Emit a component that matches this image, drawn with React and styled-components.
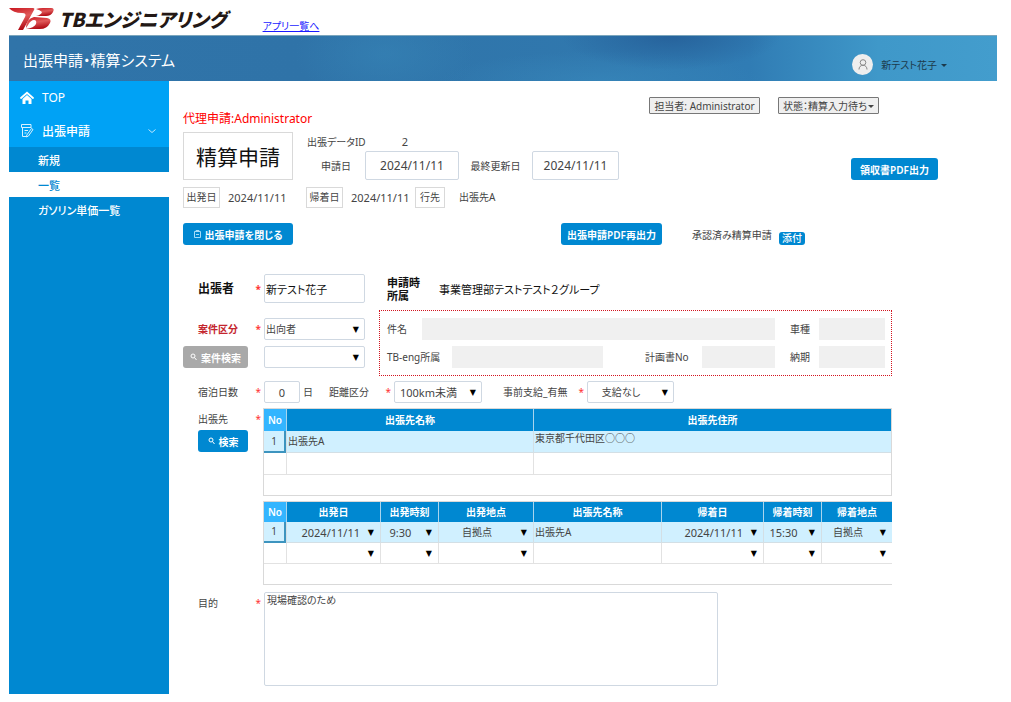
import React from "react";
import styled, { createGlobalStyle, css } from "styled-components";

const color = {
  blue: "#0088d1",
  sky: "#00a2f5",
  pale: "#d0f0ff",
  line: "#d9d9d9",
  field: "#cfd8e2",
  text: "#444",
};

const Global = createGlobalStyle`
  *, *::before, *::after { box-sizing: border-box; }
  body { margin: 0; background: #fff; }
  body, button, input, select, textarea {
    font-family: "Noto Sans", "Noto Sans CJK JP", sans-serif;
    font-feature-settings: "palt";
    font-size: 10px;
    color: ${color.text};
  }
`;

const Page = styled.div`
  padding: 0 14px 8px 9px;
`;

const BrandBar = styled.header`
  display: flex;
  align-items: flex-end;
  height: 35px;
`;

const Logo = styled.div`
  display: flex;
  align-items: center;
  gap: 4px;
  height: 30px;
  margin-bottom: 1px;
  color: #231815;
  font-family: "Noto Sans CJK JP", sans-serif;
  font-size: 19px;
  font-weight: 900;
  font-style: italic;
  line-height: 30px;
  white-space: nowrap;
`;

const AppListLink = styled.a`
  margin-left: 36px;
  color: #1a1aff;
  font-size: 10px;
  line-height: 18px;
`;

const Banner = styled.div`
  display: flex;
  align-items: center;
  justify-content: space-between;
  height: 46px;
  padding: 2px 50px 0 14px;
  border-top: 1px solid #7ba6bd;
  background:
    radial-gradient(ellipse 110px 34px at 67% 0%, #235a94bb 0%, #235a9400 100%),
    radial-gradient(ellipse 160px 30px at 60% 100%, #3a8cbf88 0%, #3a8cbf00 100%),
    radial-gradient(ellipse 90px 50px at 38% 40%, #3786b888 0%, #3786b800 100%),
    linear-gradient(90deg, #3074a9 0%, #2f73a8 30%, #3078ae 60%, #307cb4 75%, #3f98c9 88%, #439dcd 100%);
`;

const SystemTitle = styled.h1`
  margin: 0;
  color: #fff;
  font-size: 15px;
  font-weight: 400;
`;

const UserMenu = styled.button`
  display: flex;
  align-items: center;
  gap: 8px;
  padding: 9px 0 0;
  border: 0;
  background: none;
  color: #1c3a4c;
  font-size: 10px;
`;

const Avatar = styled.span`
  display: grid;
  place-items: center;
  width: 21px;
  height: 21px;
  border-radius: 50%;
  background: #eee;
`;

const Caret = styled.span`
  display: inline-block;
  margin-left: ${(p) => p.$gap || 0}px;
  border: 3px solid transparent;
  border-top-color: currentColor;
  border-bottom: 0;
  vertical-align: middle;
`;

const Body = styled.div`
  display: flex;
`;

const Sidebar = styled.nav`
  flex: 0 0 160px;
  background: ${color.blue};
`;

const NavItem = styled.a`
  display: flex;
  align-items: center;
  gap: 8px;
  height: 33px;
  padding: 0 12px 0 11px;
  background: ${color.sky};
  color: #fff;
  font-size: 12px;
  font-weight: ${(p) => (p.$strong ? 500 : 400)};
  text-decoration: none;

  svg:last-child:not(:first-child) {
    margin-left: auto;
  }
`;

const SubItem = styled.a`
  display: flex;
  align-items: center;
  height: 25px;
  padding-left: 29px;
  background: ${(p) => (p.$active ? "#fff" : color.blue)};
  color: ${(p) => (p.$active ? color.blue : "#fff")};
  font-size: 11px;
  font-weight: 500;
  text-decoration: none;
`;

const Main = styled.main`
  flex: 1;
  min-width: 0;
  padding: 16px 0 8px 14px;
`;

const TopLine = styled.div`
  display: flex;
  justify-content: space-between;
  height: 35px;
  padding-right: 118px;
`;

const ProxyNote = styled.div`
  align-self: flex-end;
  margin-bottom: 4px;
  color: #f00;
  font-size: 12px;
  line-height: 18px;
`;

const StatusGroup = styled.div`
  display: flex;
  align-items: flex-start;
  gap: 18px;
`;

const StatusButton = styled.button`
  width: ${(p) => p.$w}px;
  height: 17px;
  padding: 0;
  border: 1px solid #777;
  border-radius: 1px;
  background: #efefef;
  line-height: 14px;
  white-space: nowrap;
`;

const TitleLine = styled.div`
  display: flex;
  align-items: flex-end;
  gap: 14px;
  padding-right: 59px;
`;

const Title = styled.h2`
  display: grid;
  place-items: center;
  width: 110px;
  height: 48px;
  margin: 0;
  border: 1px solid ${color.line};
  color: #111;
  font-size: 21px;
  font-weight: 400;
`;

const RecordInfo = styled.div`
  display: grid;
  grid-template: 19px 29px / 58px 94px 73px 87px;
  align-items: center;
  margin-right: auto;
  white-space: nowrap;

  & > label,
  & > span {
    text-align: center;
  }
`;

const RecordId = styled.output`
  padding-right: 14px;
  text-align: center;
  font-size: 11px;
`;

const boxed = css`
  min-width: 0;
  border: 1px solid ${color.field};
  border-radius: 2px;
  background: #fff;
`;

const DateInput = styled.input`
  ${boxed}
  width: 100%;
  height: 29px;
  padding: 0;
  font-size: 12px;
  text-align: center;
`;

const Button = styled.button`
  display: inline-flex;
  align-items: center;
  justify-content: center;
  gap: 4px;
  width: ${(p) => p.$w}px;
  height: 22px;
  padding: 0;
  border: 0;
  border-radius: 3px;
  background: ${(p) => (p.$muted ? "#a9a9a9" : color.blue)};
  color: #fff;
  font-weight: 600;
  white-space: nowrap;
`;

const TripLine = styled.div`
  display: grid;
  grid-template-columns: 37px 86px 37px 72px 30px 1fr;
  align-items: center;
  margin-top: 7px;
`;

const Tag = styled.span`
  height: 21px;
  border: 1px solid ${color.line};
  line-height: 19px;
  text-align: center;
`;

const TripValue = styled.span`
  padding-left: ${(p) => (p.$wide ? 14 : 8)}px;
  font-size: ${(p) => (p.$wide ? 10 : 11)}px;
  line-height: 21px;
`;

const ActionLine = styled.div`
  display: flex;
  align-items: center;
  margin-top: 15px;
  padding-right: 192px;
`;

const Approved = styled.span`
  width: 117px;
  padding-left: 30px;
  white-space: nowrap;
`;

const PushRight = styled.div`
  display: flex;
  align-items: center;
  margin-left: auto;
`;

const AttachButton = styled.button`
  align-self: flex-end;
  width: 26px;
  height: 13px;
  padding: 0;
  border: 0;
  border-radius: 3px;
  background: ${color.blue};
  color: #fff;
  font-weight: 500;
  line-height: 13px;
`;

const Form = styled.form`
  margin: 29px 105px 0 0;
`;

const Row = styled.div`
  display: flex;
  align-items: ${(p) => (p.$top ? "flex-start" : "center")};
  margin-top: ${(p) => p.$mt || 0}px;
`;

const Label = styled.label`
  display: flex;
  flex: none;
  justify-content: space-between;
  align-items: center;
  width: ${(p) => p.$w || 81}px;
  padding: 0 3px 0 ${(p) => (p.$indent === undefined ? 15 : p.$indent)}px;
  line-height: 22px;
  white-space: nowrap;

  ${(p) => p.$required && css`
    &::after {
      content: "*";
      color: #f33;
      font-size: 10px;
    }
  `}
  ${(p) => p.$strong && css`
    color: #111;
    font-size: 12px;
    font-weight: 700;
  `}
  ${(p) => p.$red && css`
    color: #c4262e;
    font-weight: 600;
  `}
`;

const TextInput = styled.input`
  ${boxed}
  width: ${(p) => p.$w}px;
  height: ${(p) => (p.$tall ? 29 : 22)}px;
  padding: 0 1px;
  color: ${(p) => (p.$tall ? "#111" : color.text)};
  font-size: 11px;
  text-align: ${(p) => (p.$center ? "center" : "left")};
`;

const Affiliation = styled.span`
  width: 52px;
  margin-left: 22px;
  color: #111;
  font-size: 11px;
  font-weight: 700;
  line-height: 13px;
`;

const Department = styled.span`
  color: #111;
  font-size: 11px;
`;

const SelectBox = styled.span`
  display: grid;
  align-items: center;
  width: ${(p) => (p.$w ? p.$w + "px" : "100%")};

  & > select,
  &::after {
    grid-area: 1 / 1;
  }
  &::after {
    content: "▼";
    justify-self: end;
    padding-right: 6px;
    color: #000;
    font-family: "DejaVu Sans", sans-serif;
    font-size: 8px;
    pointer-events: none;
  }
`;

const Select = styled.select`
  appearance: none;
  min-width: 0;
  width: 100%;
  height: ${(p) => (p.$bare ? 20 : 22)}px;
  padding: 0 ${(p) => (p.$align ? 20 : 1)}px 0 1px;
  border: ${(p) => (p.$bare ? "0" : `1px solid ${color.field}`)};
  border-radius: 2px;
  background: ${(p) => (p.$bare ? "transparent" : "#fff")};
  font-size: ${(p) => (p.$size || 10)}px;
  text-align: ${(p) => p.$align || "left"};
  text-align-last: ${(p) => p.$align || "left"};
`;

const CaseArea = styled.div`
  display: flex;
  gap: 14px;
  margin-top: 7px;
`;

const CaseLeft = styled.div`
  flex: 0 0 182px;
  display: grid;
  align-content: center;
  gap: 6px;
`;

const CaseBox = styled.div`
  flex: 1;
  display: grid;
  gap: 6px;
  min-width: 0;
  padding: 7px 6px 7px 7px;
  border: 1px dotted #d3141f;
`;

const ReadOnly = styled.input.attrs({ readOnly: true })`
  flex: ${(p) => (p.$w ? `0 0 ${p.$w}px` : "1")};
  min-width: 0;
  width: 0;
  height: 22px;
  border: 0;
  background: #f0f0f0;
`;

const SearchWrap = styled.div`
  flex: 0 0 80px;
  min-width: 0;

  button {
    margin-left: 15px;
  }
`;

const TableFrame = styled.div`
  flex: 1;
  min-width: 0;
  padding-bottom: 20px;
  border: 1px solid ${color.line};
  border-right-width: ${(p) => (p.$open ? 0 : 1)}px;
`;

const Table = styled.table`
  width: 100%;
  table-layout: fixed;
  border-spacing: 0;
  line-height: 15px;

  th {
    height: ${(p) => p.$head}px;
    padding: 0;
    border-left: 1px solid #a8d5ee;
    background: ${color.blue};
    color: #fff;
    font-weight: 600;
  }
  th:first-child {
    border-left: 0;
    background: #33b5ff;
  }
  td {
    height: ${(p) => p.$row}px;
    padding: 0 0 0 1px;
    border-left: 1px solid #e2e2e2;
    border-bottom: 1px solid #e2e2e2;
    white-space: nowrap;
  }
  td:first-child {
    padding: 0;
    border-left: 0;
    text-align: center;
  }
`;

const Selected = styled.tr`
  td {
    background: ${color.pale};
    border-color: #d3dfe5;
  }
  td:first-child {
    border: solid #3d94bf;
    border-width: 0 2px 2px 0;
  }
`;

const TopCell = styled.td`
  vertical-align: top;
`;

const Purpose = styled.textarea`
  ${boxed}
  display: block;
  flex: 0 1 454px;
  height: 94px;
  padding: 0 2px;
  line-height: 14px;
  resize: none;
`;

function LogoMark() {
  return (
    <svg width="46" height="24" viewBox="0 0 46 24" aria-hidden="true">
      <defs>
        <linearGradient id="red" x1="0" y1="0" x2="0.3" y2="1">
          <stop offset="0" stopColor="#c9151e" />
          <stop offset="0.5" stopColor="#e05a5a" />
          <stop offset="1" stopColor="#b30f18" />
        </linearGradient>
      </defs>
      <g fill="url(#red)">
        <path d="M0 1H24Q26 1 25 3L14 23H9L16 10Q18 6 13 6Q4 6 0 1Z" />
        <path d="M27 2Q30 1 34 1H42Q46 1 44 5Q42 9 37 9H27Q32 8 33 5Q31 3 27 2Z" />
        <path d="M25 10L38 11Q43 12 41 16Q38 22 31 22H17Q25 21 27 17Q28 13 25 13Q22 13 19 18L17 21Q17 12 25 10Z" />
      </g>
    </svg>
  );
}

function UserIcon() {
  return (
    <svg width="12" height="13" viewBox="0 0 12 13" fill="none" stroke="#888" aria-hidden="true">
      <circle cx="6" cy="4.500" r="2.800" />
      <path d="M2 11.500C2 9 3.500 7.300 6 7.300S10 9 10 11.500" />
    </svg>
  );
}

function HomeIcon() {
  return (
    <svg width="14" height="14" viewBox="0 0 14 14" aria-hidden="true">
      <path d="M1 7L7 1.800L13 7" fill="none" stroke="#fff" strokeWidth="1.800" strokeLinecap="round" />
      <path d="M2.500 8L7 4L11.500 8V13H8.500V9.500H5.500V13H2.500Z" fill="#fff" />
    </svg>
  );
}

function FormIcon() {
  return (
    <svg width="14" height="15" viewBox="0 0 14 15" fill="none" stroke="#d9f1ff" aria-hidden="true">
      <path d="M11 5V1.500H1.500V4.500H11M2.500 4.500V13.500H6M4.500 7.500H8M4.500 10H6.500" />
      <path d="M11.500 5.500L13 6.500L8.500 13L6.500 14L6.800 12Z" />
    </svg>
  );
}

function ChevronIcon() {
  return (
    <svg width="10" height="6" viewBox="0 0 10 6" fill="none" stroke="#bfe8ff" aria-hidden="true">
      <path d="M1.500 1.500L5 4.500L8.500 1.500" />
    </svg>
  );
}

function SearchIcon() {
  return (
    <svg width="7" height="8" viewBox="0 0 7 8" fill="none" stroke="#fff" aria-hidden="true">
      <circle cx="3" cy="3" r="2" />
      <path d="M4.500 4.500L6.500 7" />
    </svg>
  );
}

function CloseDocIcon() {
  return (
    <svg width="7" height="8" viewBox="0 0 7 8" fill="none" stroke="#a6dcf8" aria-hidden="true">
      <path d="M0.500 1.500H6.500V7.500H0.500ZM2 1.500V0.500H5V1.500M2 4.500H5" />
    </svg>
  );
}

function Dropdown({ id, label, value, w, align, bare, size }) {
  return (
    <SelectBox $w={w}>
      <Select id={id} aria-label={label} defaultValue={value} $align={align} $bare={bare} $size={size}>
        <option value={value}>{value}</option>
      </Select>
    </SelectBox>
  );
}

const tripColumns = [
  { name: "No", w: 22 },
  { name: "出発日", w: 94, align: "right", size: 11 },
  { name: "出発時刻", w: 58, align: "center", size: 11 },
  { name: "出発地点", w: 95, align: "center" },
  { name: "出張先名称", w: 128, text: true },
  { name: "帰着日", w: 102, align: "right", size: 11 },
  { name: "帰着時刻", w: 58, align: "center", size: 11 },
  { name: "帰着地点", align: "center" },
];
const tripValues = ["1", "2024/11/11", "9:30", "自拠点", "出張先A", "2024/11/11", "15:30", "自拠点"];

function TripCells({ values }) {
  return tripColumns.map((c, i) => (
    <td key={i}>
      {i === 0 || c.text ? (
        values[i]
      ) : (
        <Dropdown label={c.name} value={values[i] || ""} align={c.align} size={c.size} bare />
      )}
    </td>
  ));
}

export default function App() {
  return (
    <>
      <Global />
      <Page>
        <BrandBar>
          <Logo>
            <LogoMark />
            TBエンジニアリング
          </Logo>
          <AppListLink href="#apps">アプリ一覧へ</AppListLink>
        </BrandBar>
        <Banner>
          <SystemTitle>出張申請・精算システム</SystemTitle>
          <UserMenu type="button">
            <Avatar><UserIcon /></Avatar>
            <span>新テスト花子<Caret $gap={4} /></span>
          </UserMenu>
        </Banner>
        <Body>
          <Sidebar>
            <NavItem href="#top"><HomeIcon />TOP</NavItem>
            <NavItem href="#trip" $strong><FormIcon />出張申請<ChevronIcon /></NavItem>
            <SubItem href="#new">新規</SubItem>
            <SubItem href="#list" $active>一覧</SubItem>
            <SubItem href="#gas">ガソリン単価一覧</SubItem>
          </Sidebar>
          <Main>
            <TopLine>
              <ProxyNote>代理申請:Administrator</ProxyNote>
              <StatusGroup>
                <StatusButton type="button" $w={111}>担当者: Administrator</StatusButton>
                <StatusButton type="button" $w={101}>状態：精算入力待ち<Caret $gap={1} /></StatusButton>
              </StatusGroup>
            </TopLine>
            <TitleLine>
              <Title>精算申請</Title>
              <RecordInfo>
                <label htmlFor="record">出張データID</label>
                <RecordId id="record">2</RecordId>
                <span />
                <span />
                <label htmlFor="applied">申請日</label>
                <DateInput id="applied" defaultValue="2024/11/11" />
                <label htmlFor="updated">最終更新日</label>
                <DateInput id="updated" defaultValue="2024/11/11" />
              </RecordInfo>
              <Button type="button" $w={87}>領収書PDF出力</Button>
            </TitleLine>
            <TripLine>
              <Tag>出発日</Tag>
              <TripValue>2024/11/11</TripValue>
              <Tag>帰着日</Tag>
              <TripValue>2024/11/11</TripValue>
              <Tag>行先</Tag>
              <TripValue $wide>出張先A</TripValue>
            </TripLine>
            <ActionLine>
              <Button type="button" $w={110}><CloseDocIcon />出張申請を閉じる</Button>
              <PushRight>
                <Button type="button" $w={101}>出張申請PDF再出力</Button>
                <Approved>承認済み精算申請</Approved>
                <AttachButton type="button">添付</AttachButton>
              </PushRight>
            </ActionLine>
            <Form>
              <Row>
                <Label htmlFor="traveller" $required $strong>出張者</Label>
                <TextInput id="traveller" defaultValue="新テスト花子" $w={101} $tall />
                <Affiliation>申請時<br />所属</Affiliation>
                <Department>事業管理部テストテスト２グループ</Department>
              </Row>
              <CaseArea>
                <CaseLeft>
                  <Row>
                    <Label htmlFor="kind" $required $red>案件区分</Label>
                    <Dropdown id="kind" value="出向者" w={101} />
                  </Row>
                  <Row>
                    <Label as="div" $indent={0}>
                      <Button type="button" $w={65} $muted><SearchIcon />案件検索</Button>
                    </Label>
                    <Dropdown label="案件" value="" w={101} />
                  </Row>
                </CaseLeft>
                <CaseBox>
                  <Row>
                    <Label htmlFor="subject" $w={35} $indent={0}>件名</Label>
                    <ReadOnly id="subject" />
                    <Label htmlFor="car" $w={44}>車種</Label>
                    <ReadOnly id="car" $w={66} />
                  </Row>
                  <Row>
                    <Label htmlFor="section" $w={65} $indent={0}>TB-eng所属</Label>
                    <ReadOnly id="section" />
                    <Label htmlFor="plan" $w={99} $indent={42}>計画書No</Label>
                    <ReadOnly id="plan" $w={73} />
                    <Label htmlFor="due" $w={44}>納期</Label>
                    <ReadOnly id="due" $w={66} />
                  </Row>
                </CaseBox>
              </CaseArea>
              <Row $mt={5}>
                <Label htmlFor="nights" $required>宿泊日数</Label>
                <TextInput id="nights" defaultValue="0" $w={36} $center />
                <Label as="span" $w={14} $indent={3}>日</Label>
                <Label htmlFor="distance" $w={80} $required>距離区分</Label>
                <Dropdown id="distance" value="100km未満" w={88} align="center" size={11} />
                <Label htmlFor="advance" $w={105} $indent={21} $required>事前支給_有無</Label>
                <Dropdown id="advance" value="支給なし" w={87} align="center" />
              </Row>
              <Row $mt={5} $top>
                <SearchWrap>
                  <Label as="div" $required>出張先</Label>
                  <Button type="button" $w={50}><SearchIcon />検索</Button>
                </SearchWrap>
                <TableFrame>
                  <Table $head={22} $row={22}>
                    <colgroup>
                      <col width="22" />
                      <col width="247" />
                      <col />
                    </colgroup>
                    <thead>
                      <tr><th>No</th><th>出張先名称</th><th>出張先住所</th></tr>
                    </thead>
                    <tbody>
                      <Selected><td>1</td><td>出張先A</td><TopCell>東京都千代田区○○○</TopCell></Selected>
                      <tr><td /><td /><td /></tr>
                    </tbody>
                  </Table>
                </TableFrame>
              </Row>
              <Row $mt={5} $top>
                <SearchWrap />
                <TableFrame $open>
                  <Table $head={20} $row={21}>
                    <colgroup>
                      {tripColumns.map((c) => <col key={c.name} width={c.w} />)}
                    </colgroup>
                    <thead>
                      <tr>{tripColumns.map((c) => <th key={c.name}>{c.name}</th>)}</tr>
                    </thead>
                    <tbody>
                      <Selected><TripCells values={tripValues} /></Selected>
                      <tr><TripCells values={[]} /></tr>
                    </tbody>
                  </Table>
                </TableFrame>
              </Row>
              <Row $mt={7} $top>
                <Label htmlFor="purpose" $required>目的</Label>
                <Purpose id="purpose" defaultValue="現場確認のため" />
              </Row>
            </Form>
          </Main>
        </Body>
      </Page>
    </>
  );
}
